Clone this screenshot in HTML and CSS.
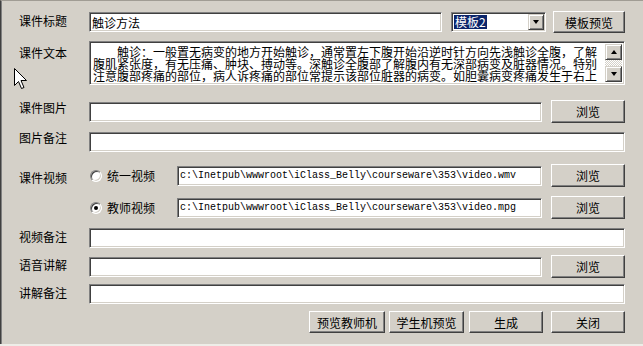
FILE: index.html
```html
<!DOCTYPE html>
<html lang="zh-CN">
<head>
  <meta charset="UTF-8" />
  <title>课件编辑</title>
  <link rel="stylesheet" href="styles.css">
</head>
<body>
  <div class="dlg">
    <div class="row r1">
      <span class="lbl">课件标题</span>
      <input class="fld title" type="text" value="触诊方法">
      <div class="combo">
        <span class="sel">模板2</span>
        <span class="drop"><i class="tri down"></i></span>
      </div>
      <button class="btn tpl">模板预览</button>
    </div>

    <div class="row r2">
      <span class="lbl">课件文本</span>
      <div class="memo">
        <div class="memo-text">　　触诊：一般置无病变的地方开始触诊，通常置左下腹开始沿逆时针方向先浅触诊全腹，了解腹肌紧张度，有无压痛、肿块、搏动等。深触诊全腹部了解腹内有无深部病变及脏器情况。特别注意腹部疼痛的部位，病人诉疼痛的部位常提示该部位脏器的病变。如胆囊病变疼痛发生于右上</div>
        <div class="vscroll">
          <span class="sbtn"><i class="tri up"></i></span>
          <span class="track"></span>
          <span class="sbtn"><i class="tri down"></i></span>
        </div>
      </div>
    </div>

    <div class="row r3">
      <span class="lbl">课件图片</span>
      <input class="fld short" type="text" value="">
      <button class="btn browse">浏览</button>
    </div>

    <div class="row r4">
      <span class="lbl">图片备注</span>
      <input class="fld full" type="text" value="">
    </div>

    <div class="row r5">
      <span class="lbl">课件视频</span>
      <label class="radio"><span class="dot"></span>统一视频</label>
      <input class="fld path" type="text" value="c:\Inetpub\wwwroot\iClass_Belly\courseware\353\video.wmv">
      <button class="btn browse">浏览</button>
    </div>

    <div class="row r6">
      <span class="lbl"></span>
      <label class="radio"><span class="dot on"></span>教师视频</label>
      <input class="fld path" type="text" value="c:\Inetpub\wwwroot\iClass_Belly\courseware\353\video.mpg">
      <button class="btn browse">浏览</button>
    </div>

    <div class="row r7">
      <span class="lbl">视频备注</span>
      <input class="fld full" type="text" value="">
    </div>

    <div class="row r8">
      <span class="lbl">语音讲解</span>
      <input class="fld short" type="text" value="">
      <button class="btn browse">浏览</button>
    </div>

    <div class="row r9">
      <span class="lbl">讲解备注</span>
      <input class="fld full" type="text" value="">
    </div>

    <div class="row actions">
      <button class="btn teacher">预览教师机</button>
      <button class="btn student">学生机预览</button>
      <button class="btn make">生成</button>
      <button class="btn close">关闭</button>
    </div>

    <svg class="cursor" width="14" height="22" viewBox="0 0 14 22">
      <path d="M0.5 0.5 V17.5 L4.5 13.5 L7.5 20.5 L10 19.5 L7 12.5 H12.5 Z" fill="#fff" stroke="#000" stroke-width="1"/>
    </svg>
  </div>
</body>
</html>
```

FILE: styles.css
```css
* {
  box-sizing: border-box;
}

html, body {
  margin: 0;
  padding: 0;
}

body {
  width: 643px;
  height: 346px;
  overflow: hidden;
  background: #eeede8;
  font-family: "Noto Sans CJK SC", "Liberation Sans", sans-serif;
  font-size: 12px;
  line-height: 12px;
  color: #000;
}

.dlg {
  position: relative;
  height: 344px;
  background: #d4d0c8;
  border-top: 1px solid #a09c94;
  border-left: 1px solid #404040;
  box-shadow: inset 1px 0 #808080;
  padding: 10px 18px 0 18px;
}

.row {
  display: flex;
  align-items: center;
  height: 22px;
}

.r2 { margin-top: 8px; height: 44px; align-items: stretch; }
.r3 { margin-top: 15px; height: 23px; }
.r4 { margin-top: 8px; }
.r5 { margin-top: 11px; height: 23px; }
.r6 { margin-top: 9px; height: 23px; }
.r7 { margin-top: 8px; }
.r8 { margin-top: 6px; height: 23px; }
.r9 { margin-top: 5px; }
.actions { margin-top: 6px; justify-content: flex-end; }

.lbl {
  flex: none;
  width: 70px;
  align-self: flex-start;
  line-height: 12px;
  padding-top: 4px;
}

.r2 .lbl { padding-top: 6px; }
.r3 .lbl { padding-top: 2px; }
.r4 .lbl { padding-top: 1px; }
.r5 .lbl { padding-top: 8px; }

/* sunken edit box */
.fld {
  flex: none;
  height: 20px;
  margin: 0;
  padding: 0 0 0 1px;
  background: #fff;
  border: 1px solid;
  border-color: #808080 #fff #fff #808080;
  box-shadow: inset 1px 1px #404040, inset -1px -1px #d4d0c8;
  font-family: "Noto Sans CJK SC", sans-serif;
  font-size: 12px;
  color: #000;
  outline: none;
}

.title { width: 353px; padding-left: 2px; }
.short { width: 453px; }
.full { width: 536px; }

.path {
  width: 365px;
  font-family: "Liberation Mono", monospace;
  font-size: 10px;
  padding-left: 2px;
}

/* combo box */
.combo {
  flex: none;
  width: 95px;
  height: 20px;
  margin-left: 9px;
  display: flex;
  align-items: center;
  justify-content: space-between;
  padding: 2px 1px 2px 2px;
  background: #fff;
  border: 1px solid;
  border-color: #808080 #fff #fff #808080;
  box-shadow: inset 1px 1px #404040, inset -1px -1px #d4d0c8;
}

.sel {
  background: #0a246a;
  color: #fff;
  line-height: 14px;
  padding: 0 1px;
}

.drop {
  width: 16px;
  height: 16px;
  display: flex;
  align-items: center;
  justify-content: center;
  background: #d4d0c8;
  border: 1px solid;
  border-color: #d4d0c8 #404040 #404040 #d4d0c8;
  box-shadow: inset 1px 1px #fff, inset -1px -1px #808080;
}

.tri {
  width: 0;
  height: 0;
  border-left: 3.5px solid transparent;
  border-right: 3.5px solid transparent;
}

.tri.down { border-top: 4px solid #000; }
.tri.up { border-bottom: 4px solid #000; }

/* raised push button */
.btn {
  flex: none;
  height: 23px;
  margin: 0;
  padding: 0;
  background: #d4d0c8;
  border: 1px solid;
  border-color: #fff #404040 #404040 #fff;
  box-shadow: inset -1px -1px #808080;
  font-family: "Noto Sans CJK SC", sans-serif;
  font-size: 12px;
  color: #000;
}

.tpl { width: 72px; height: 22px; margin-left: 7px; }
.browse { width: 74px; margin-left: 9px; }

.actions .btn { height: 22px; }
.teacher { width: 76px; }
.student { width: 75px; margin-left: 4px; }
.make { width: 74px; margin-left: 5px; }
.close { width: 74px; margin-left: 8px; }

/* multi-line text */
.memo {
  flex: none;
  width: 536px;
  display: flex;
  background: #fff;
  border: 1px solid;
  border-color: #808080 #fff #fff #808080;
  box-shadow: inset 1px 1px #404040, inset -1px -1px #d4d0c8;
  padding: 2px;
}

.memo-text {
  flex: 1;
  padding: 2px 0 0 1px;
  line-height: 12px;
}

.vscroll {
  flex: none;
  width: 17px;
  display: flex;
  flex-direction: column;
}

.sbtn {
  height: 16px;
  display: flex;
  align-items: center;
  justify-content: center;
  background: #d4d0c8;
  border: 1px solid;
  border-color: #d4d0c8 #404040 #404040 #d4d0c8;
  box-shadow: inset 1px 1px #fff, inset -1px -1px #808080;
}

.track {
  flex: 1;
  background: repeating-conic-gradient(#fff 0 25%, #d4d0c8 0 50%) 0 0 / 2px 2px;
}

/* radio */
.radio {
  flex: none;
  width: 88px;
  display: flex;
  align-items: center;
  gap: 5px;
  padding-left: 1px;
}

.dot {
  position: relative;
  width: 12px;
  height: 12px;
  border-radius: 50%;
  background: #fff;
  border: 1px solid;
  border-color: #808080 #fff #fff #808080;
  box-shadow: inset 1px 1px #404040, inset -1px -1px #d4d0c8;
}

.dot.on::after {
  content: "";
  position: absolute;
  left: 3px;
  top: 3px;
  width: 4px;
  height: 4px;
  border-radius: 50%;
  background: #000;
}

.cursor {
  position: absolute;
  left: 13px;
  top: 67px;
}
```
